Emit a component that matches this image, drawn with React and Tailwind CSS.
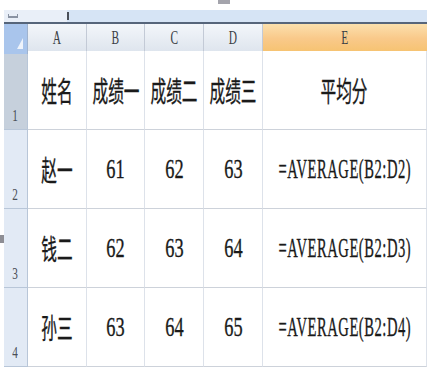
import React from "react";

const cols = ["A", "B", "C", "D", "E"];

const rows = [
  { n: "1", cells: ["姓名", "成绩一", "成绩二", "成绩三", "平均分"], head: true },
  { n: "2", cells: ["赵一", "61", "62", "63", "=AVERAGE(B2:D2)"] },
  { n: "3", cells: ["钱二", "62", "63", "64", "=AVERAGE(B2:D3)"] },
  { n: "4", cells: ["孙三", "63", "64", "65", "=AVERAGE(B2:D4)"] },
];

const grid = "grid grid-cols-[24px_59px_58px_59px_59px_164px]";

const Cell = ({ value, col, head }) => {
  const isCjk = col === 0 || head;
  const isFormula = col === 4 && !head;
  let cls = "inline-block whitespace-nowrap text-[#1a1a1a] [-webkit-text-stroke:0.35px_#1a1a1a] ";
  if (isCjk) {
    cls += "text-[28px] font-normal scale-x-[0.56] font-['Noto_Sans_CJK_SC',sans-serif]";
  } else if (isFormula) {
    cls += "text-[27px] tracking-[1px] scale-x-[0.54] font-['Liberation_Serif',serif]";
  } else {
    cls += "text-[27px] scale-x-[0.68] font-['Liberation_Serif',serif]";
  }
  return (
    <div className="flex items-center justify-center border-r border-b border-r-[#dde2ea] border-b-[#cdd2da] bg-white overflow-hidden">
      <span className={cls}>{value}</span>
    </div>
  );
};

export default function App() {
  return (
    <div className="relative w-[437px] h-[371px] bg-white overflow-hidden">
      {/* bits of the window peeking in */}
      <div className="absolute left-[218px] top-0 w-[12px] h-[4px] bg-[#a4a4ac]" />
      <div className="absolute left-0 top-[235px] w-[4px] h-[8px] bg-[#8e8e94]" />

      <div className="pt-[10px] pl-[4px]">
        {/* formula bar strip */}
        <div className="flex w-[423px] h-[12px] bg-[#d6e4f5]">
          <div className="flex items-center w-[63px] bg-[#e9eff8] pl-[4px]">
            <div className="w-[10px] h-[4px] border-b-2 border-l border-r border-[#8a93a3]" />
          </div>
          <div className="w-[2px] h-[8px] mt-[2px] bg-[#4a4f58]" />
        </div>
        <div className="w-[423px] h-[2px] bg-[#56657a]" />

        {/* column headers */}
        <div className={`${grid} h-[27px] w-[423px]`}>
          <div className="relative bg-[#a9c5ec] border-r border-[#9fb3cf]">
            <svg className="absolute right-[4px] bottom-[5px]" width="6" height="11" viewBox="0 0 6 11">
              <polygon points="6,0 6,11 0,11" fill="#eef3fb" />
            </svg>
          </div>
          {cols.map((c, i) => (
            <div
              key={c}
              className={
                i === 4
                  ? "flex items-center justify-center bg-gradient-to-b from-[#fbe0ad] via-[#f9c98a] to-[#f6c26e] border-b border-[#eba94e]"
                  : "flex items-center justify-center bg-gradient-to-b from-[#f3f6fa] to-[#dde4ed] border-r border-b border-[#c3cad6]"
              }
            >
              <span className="inline-block scale-x-[0.6] text-[19px] text-[#3b3f46] font-['Liberation_Serif',serif]">
                {c}
              </span>
            </div>
          ))}
        </div>

        {/* rows */}
        {rows.map((r) => (
          <div key={r.n} className={`${grid} h-[79px] w-[423px]`}>
            <div
              className={`flex items-end pl-[7px] pb-[5px] border-r border-b border-[#b8c6d8] ${
                r.head ? "bg-[#c6d0dc]" : "bg-[#e2eaf5]"
              }`}
            >
              <span className="inline-block scale-x-[0.7] text-[16px] leading-none text-[#4a4f58] font-['Liberation_Serif',serif]">
                {r.n}
              </span>
            </div>
            {r.cells.map((v, i) => (
              <Cell key={i} value={v} col={i} head={r.head} />
            ))}
          </div>
        ))}
      </div>
    </div>
  );
}
